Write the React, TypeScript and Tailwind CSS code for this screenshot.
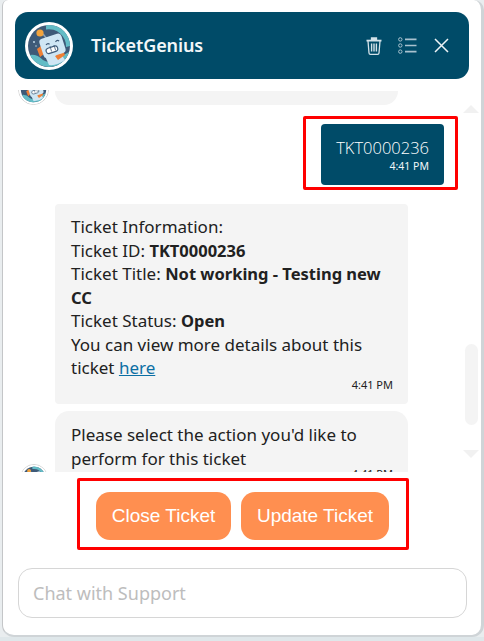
import React from "react";

const bodyFont = "font-['Noto_Sans','Open_Sans',sans-serif]";

function BotAvatar({ size }: { size: number }) {
  return (
    <svg width={size} height={size} viewBox="0 0 48 48" className="shrink-0">
      <circle cx="24" cy="24" r="24" fill="#ffffff" />
      <circle cx="24" cy="24" r="21" fill="#3e5a78" />
      <path d="M21 3.2 A21 21 0 0 1 45 24 L41 25 A17 17 0 0 0 21 7.5 Z" fill="#63bcc6" />
      <path d="M5 33 Q12 32 18 38 Q26 43 33 36 L44 30 A21 21 0 0 1 5 33 Z" fill="#63bcc6" />
      <path d="M20 34 L36 32 L40 38 Q32 44 24 43 Z" fill="#cfe6f4" />
      <path d="M18 12 L22 17" stroke="#8fa3b5" strokeWidth="1.5" />
      <circle cx="15" cy="11" r="3.6" fill="#f2a33c" />
      <path d="M12 27 L16 24 L19 32 L15 35 Z" fill="#ee7f35" />
      <path d="M30 34 L38 29 L40 33 L33 38 Z" fill="#ee7f35" />
      <rect x="16" y="14" width="23" height="20" rx="3.5" fill="#cfe6f4" transform="rotate(-18 27 24)" />
      <rect x="21" y="25" width="12" height="5.5" rx="2.7" fill="#ffffff" stroke="#3e5a78" strokeWidth="1.1" transform="rotate(-18 27 28)" />
      <path d="M25 24.2 L26.6 29.5 M29 23 L30.6 28.3" stroke="#3e5a78" strokeWidth="0.8" />
      <path d="M21 23 q1.6 -2.2 3.6 -0.8 M30.5 19.8 q1.6 -2.2 3.6 -0.8" stroke="#3e5a78" strokeWidth="1.2" fill="none" />
      <circle cx="9" cy="20" r="0.9" fill="#cfe6f4" />
      <circle cx="11" cy="24" r="0.7" fill="#cfe6f4" />
    </svg>
  );
}

function TrashIcon() {
  return (
    <svg width="16" height="18" viewBox="0 0 16 18" fill="none" stroke="#d3e2e9" strokeWidth="1.3">
      <path d="M0.5 3.6 H15.5" strokeWidth="1.8" />
      <path d="M5.5 3 V1 H10.5 V3" fill="#d3e2e9" />
      <path d="M2 4 L3 16 Q3.1 17.3 4.4 17.3 H11.6 Q12.9 17.3 13 16 L14 4" />
      <path d="M5.6 6.5 V14.5 M8 6.5 V14.5 M10.4 6.5 V14.5" strokeWidth="1.4" />
    </svg>
  );
}

function ListIcon() {
  return (
    <svg width="19" height="17" viewBox="0 0 19 17" fill="none" stroke="#a9c2cf" strokeWidth="1">
      <circle cx="2.3" cy="2.4" r="1.7" />
      <circle cx="2.3" cy="8.5" r="1.7" />
      <circle cx="2.3" cy="14.6" r="1.7" />
      <path d="M7 2.4 H18.5 M7 8.5 H18.5 M7 14.6 H18.5" strokeWidth="1.6" />
    </svg>
  );
}

function CloseIcon() {
  return (
    <svg width="15" height="15" viewBox="0 0 15 15" fill="none" stroke="#eef4f7" strokeWidth="1.5">
      <path d="M1 1 L14 14 M14 1 L1 14" />
    </svg>
  );
}

export default function App() {
  return (
    <div className={`${bodyFont} w-[484px] h-[641px] bg-[#e9edef] overflow-hidden flex flex-col`}>
      <div className="h-[637px] w-[482px] ml-[2px] bg-white border-l border-r-[3px] border-b-[2px] border-l-[#c4c6c8] border-r-[#cfd4d7] border-b-[#cfd4d7] rounded-b-[12px] rounded-tr-[10px] rounded-tl-[6px] flex flex-col">
        {/* header */}
        <div className="mt-[12px] ml-[12px] w-[454px] h-[67px] shrink-0 rounded-[13px] bg-[#004b68] flex items-center pl-[10px]">
          <BotAvatar size={48} />
          <span className="ml-[18px] text-[18px] font-semibold text-[#f2f7f9] tracking-[-0.1px]">TicketGenius</span>
          <div className="ml-auto mr-[20px] flex items-center">
            <TrashIcon />
            <span className="ml-[16px] flex"><ListIcon /></span>
            <span className="ml-[17px] flex"><CloseIcon /></span>
          </div>
        </div>

        {/* messages */}
        <div className="h-[393px] shrink-0 flex overflow-hidden">
          <div className="w-[458px] shrink-0 overflow-hidden">
            <div className="mt-[11px] h-[15px] flex items-end overflow-hidden pl-[15px]">
              <div className="-mt-[16px] rounded-full border border-[#d4d4d4] bg-white">
                <BotAvatar size={29} />
              </div>
              <div className="ml-[6px] w-[343px] h-[14px] bg-[#f4f4f4] rounded-b-[14px]" />
            </div>

            <div className="mt-[11px] flex justify-end pr-[3px]">
              <div className="w-[155px] h-[74px] border-[3px] border-[#ff0000] rounded-[2px] pt-[5px] pl-[15px]">
                <div className="w-[123px] h-[61px] rounded-[4px] bg-[#004b68] text-white flex flex-col items-end pr-[15px] pt-[12px]">
                  <span className="text-[16.5px] leading-[24px] font-['Open_Sans',sans-serif] font-light text-white">TKT0000236</span>
                  <span className="text-[10.5px] leading-[12px] text-[#f2f7f9]">4:41 PM</span>
                </div>
              </div>
            </div>

            <div className="mt-[14px] ml-[52px] w-[353px] h-[200px] bg-[#f4f4f4] rounded-[4px] pl-[16px] pr-[15px] pt-[11px] text-[17px] leading-[23.5px] text-[#212121]">
              <p>Ticket Information:</p>
              <p>Ticket ID: <b className="font-bold text-[16.5px]">TKT0000236</b></p>
              <p>Ticket Title: <b className="font-bold text-[16.5px]">Not working - Testing new CC</b></p>
              <p>Ticket Status: <b className="font-bold text-[16.5px]">Open</b></p>
              <p>You can view more details about this ticket <a className="text-[#0b6fa4] underline">here</a></p>
              <p className="text-right text-[11px] leading-[14px] -mt-[2px]">4:41 PM</p>
            </div>

            <div className="mt-[7px] flex items-start pl-[17px]">
              <div className="mt-[53px] mr-[7px] rounded-full border border-[#d4d4d4] bg-white">
                <BotAvatar size={26} />
              </div>
              <div className="w-[353px] h-[80px] bg-[#f4f4f4] rounded-[14px] pl-[16px] pr-[15px] pt-[12px] text-[17px] leading-[23.5px] text-[#212121]">
                <p>Please select the action you'd like to perform for this ticket</p>
                <p className="text-right text-[11px] leading-[14px] -mt-[3px]">4:41 PM</p>
              </div>
            </div>
          </div>

          {/* scrollbar */}
          <div className="w-[14px] ml-[3px] flex flex-col items-center">
            <div className="mt-[26px] w-0 h-0 border-x-[8px] border-x-transparent border-b-[8px] border-b-[#f1f1f1]" />
            <div className="mt-[231px] w-[13px] h-[81px] rounded-[7px] bg-[#f4f4f4]" />
            <div className="mt-[25px] w-0 h-0 border-x-[8px] border-x-transparent border-t-[8px] border-t-[#f1f1f1]" />
          </div>
        </div>

        {/* quick actions */}
        <div className="mt-[6px] ml-[74px] w-[332px] h-[72px] shrink-0 border-[3px] border-[#ff0000] rounded-[2px] flex items-start pt-[11px] pl-[16px] gap-[10px] font-['Liberation_Sans',Arial,sans-serif]">
          <button className="w-[135px] h-[48px] rounded-[14px] bg-[#ff8f50] text-white text-[19px]">Close Ticket</button>
          <button className="w-[148px] h-[48px] rounded-[14px] bg-[#ff8f50] text-white text-[19px]">Update Ticket</button>
        </div>

        {/* input */}
        <div className="mt-[18px] ml-[15px] w-[449px] h-[50px] shrink-0 rounded-[14px] border border-[#d6d6d6] flex items-center pl-[14px] text-[18px] text-[#bdbdbd]">
          Chat with Support
        </div>
      </div>
      <div className="flex-1 bg-[#dfe7ea]" />
    </div>
  );
}
